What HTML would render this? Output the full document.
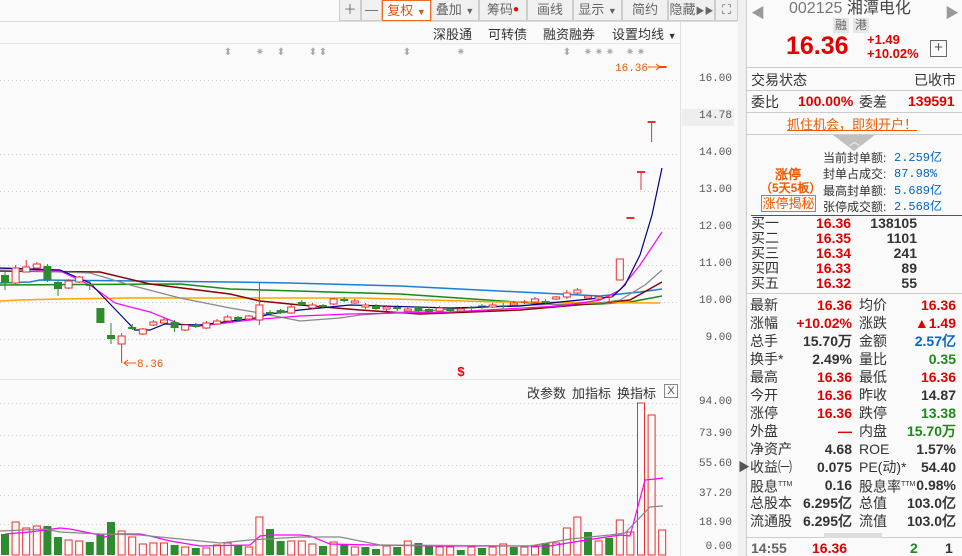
<!DOCTYPE html>
<html><head><meta charset="utf-8">
<style>
*{margin:0;padding:0;box-sizing:border-box}
body{width:962px;height:556px;overflow:hidden;background:#fafafa;font-family:"Liberation Sans","Noto Sans CJK SC",sans-serif;font-size:13px;color:#333;position:relative}
.abs{position:absolute;white-space:nowrap}
.tb{position:absolute;top:0;height:21px;border:1px solid #ccc;border-top:none;background:#f0f0f0;color:#666;font-size:13px;line-height:20px;text-align:center}
.r{color:#e00000}.g{color:#1a8a1a}.b{color:#0066cc}.o{color:#f05a00}
.row{position:absolute;left:750px;width:206px;height:18px;line-height:18px;font-size:14px}
.row span{position:absolute}
.num{font-weight:bold;font-family:"Liberation Sans",sans-serif}
</style></head><body>
<div class="abs" style="left:0;top:21px;width:740px;height:1px;background:#ddd"></div>
<div class="tb" style="left:339px;width:22px">＋</div>
<div class="tb" style="left:361px;width:21px">—</div>
<div class="tb" style="left:382px;width:49px;background:#fff;border:1px solid #f06a20;color:#e05010">复权 <span style="font-size:9px">▼</span></div>
<div class="tb" style="left:431px;width:48px">叠加 <span style="font-size:9px">▼</span></div>
<div class="tb" style="left:479px;width:48px">筹码<span style="color:#e00;font-size:10px;vertical-align:top">●</span></div>
<div class="tb" style="left:527px;width:46px">画线</div>
<div class="tb" style="left:573px;width:49px">显示 <span style="font-size:9px">▼</span></div>
<div class="tb" style="left:622px;width:46px">简约</div>
<div class="tb" style="left:668px;width:47px">隐藏<span style="font-size:9px">▶▶</span></div>
<div class="tb" style="left:715px;width:23px">⛶</div>
<div class="abs" style="left:0;top:43px;width:680px;height:1px;background:#e6e6e6"></div>
<div class="abs" style="left:433px;top:24px;font-size:13px;color:#333">深股通</div>
<div class="abs" style="left:488px;top:24px;font-size:13px;color:#333">可转债</div>
<div class="abs" style="left:543px;top:24px;font-size:13px;color:#333">融资融券</div>
<div class="abs" style="left:612px;top:24px;font-size:13px;color:#333">设置均线 <span style="font-size:9px">▼</span></div>
<div class="abs" style="left:680px;top:21px;width:1px;height:535px;background:#e0e0e0"></div>
<div class="abs" style="left:0;top:379px;width:680px;height:1px;background:#e6e6e6"></div>
<svg class="abs" style="left:0;top:0" width="740" height="556" id="ch"></svg>
<div class="abs" style="left:682px;top:109px;width:52px;height:17px;background:#eee"></div>
<div id="ax"></div>
<div class="abs" style="left:527px;top:383px;font-size:13px">改参数</div>
<div class="abs" style="left:572px;top:383px;font-size:13px">加指标</div>
<div class="abs" style="left:617px;top:383px;font-size:13px">换指标</div>
<div class="abs" style="left:664px;top:384px;width:14px;height:14px;border:1px solid #888;font-size:11px;line-height:12px;text-align:center;color:#555">X</div>
<div class="abs" style="left:738px;top:0;width:8px;height:556px;background:#f0f0f0"></div>
<div class="abs" style="left:746px;top:0;width:1px;height:556px;background:#ccc"></div>
<div class="abs" style="left:738px;top:458px;font-size:12px;color:#555">▶</div>
<div class="abs" style="left:751px;top:3px;color:#999;font-size:14px">◀</div>
<div class="abs" style="left:945px;top:3px;color:#999;font-size:14px">▶</div>
<div class="abs" style="left:789px;top:0px;font-size:16px;line-height:17px;color:#777">002125 <span style="color:#444">湘潭电化</span></div>
<div class="abs" style="left:833px;top:18px;width:16px;height:15px;background:#e6e6e6;font-size:12px;color:#666;text-align:center;line-height:15px">融</div>
<div class="abs" style="left:853px;top:18px;width:16px;height:15px;background:#e6e6e6;font-size:12px;color:#666;text-align:center;line-height:15px">港</div>
<div class="abs r num" style="left:786px;top:32px;font-size:25px">16.36</div>
<div class="abs r num" style="left:867px;top:33px;font-size:13px;line-height:14px">+1.49<br>+10.02%</div>
<div class="abs" style="left:930px;top:40px;width:17px;height:17px;border:1px solid #666;font-size:15px;line-height:14px;text-align:center;color:#555">+</div>
<div class="abs" style="left:747px;top:67px;width:215px;height:1px;background:#ccc"></div>
<div class="abs" style="left:751px;top:70px;font-size:14px">交易状态</div>
<div class="abs" style="left:914px;top:70px;font-size:14px">已收市</div>
<div class="abs" style="left:747px;top:90px;width:215px;height:1px;background:#ccc"></div>
<div class="abs" style="left:751px;top:92px;font-size:14px">委比</div>
<div class="abs r num" style="left:798px;top:93px;font-size:14px">100.00%</div>
<div class="abs" style="left:859px;top:92px;font-size:14px">委差</div>
<div class="abs r num" style="left:908px;top:93px;font-size:14px">139591</div>
<div class="abs" style="left:747px;top:112px;width:215px;height:1px;background:#ccc"></div>
<div class="abs o" style="left:787px;top:114px;font-size:13px;text-decoration:underline">抓住机会，即刻开户！</div>
<div class="abs" style="left:747px;top:134px;width:215px;height:1px;background:#ccc"></div>
<div class="abs" style="left:833px;top:135px;width:0;height:0;border-left:21px solid transparent;border-right:21px solid transparent;border-top:16px solid #c0c0c0"></div>
<div class="abs" style="left:849px;top:133px;color:#fff;font-size:11px">︿</div>
<div class="abs o num" style="left:775px;top:164px;font-size:13px">涨停</div>
<div class="abs o num" style="left:760px;top:179px;font-size:12px">（5天5板）</div>
<div class="abs o" style="left:761px;top:195px;width:55px;height:17px;border:1px solid #f06a20;font-size:13px;line-height:15px;text-align:center">涨停揭秘</div>
<div class="abs" style="left:823px;top:150px;font-size:12px;line-height:16.3px">当前封单额:<br>封单占成交:<br>最高封单额:<br>张停成交额:</div>
<div class="abs b" style="left:894px;top:150px;font-size:12px;line-height:16.3px;font-family:'Liberation Mono','Noto Sans CJK SC',monospace">2.259亿<br>87.98%<br>5.689亿<br>2.568亿</div>
<div class="abs" style="left:751px;top:215px;width:211px;height:1px;background:#555"></div>
<div class="abs" style="left:751px;top:216px;font-size:14px;line-height:15px">买一<br>买二<br>买三<br>买四<br>买五</div>
<div class="abs r num" style="left:816px;top:216px;font-size:14px;line-height:15px">16.36<br>16.35<br>16.34<br>16.33<br>16.32</div>
<div class="abs num" style="left:860px;top:216px;width:57px;text-align:right;font-size:14px;line-height:15px;color:#333">138105<br>1101<br>241<br>89<br>55</div>
<div class="abs" style="left:747px;top:293px;width:215px;height:1px;background:#ccc"></div>
<div id="st"></div>
<div class="abs" style="left:747px;top:537px;width:215px;height:1px;background:#ccc"></div>
<div class="abs" style="left:824px;top:533px;width:58px;height:5px;background:#ddd"></div>
<div class="abs num" style="left:751px;top:540px;font-size:14px;color:#666">14:55</div>
<div class="abs r num" style="left:812px;top:540px;font-size:14px">16.36</div>
<div class="abs g num" style="left:910px;top:540px;font-size:14px">2</div>
<div class="abs num" style="left:945px;top:540px;font-size:14px;color:#333">1</div>
<script>
var S='';
function L(pts,c,w){S+='<polyline fill="none" stroke="'+c+'" stroke-width="'+(w||1)+'" points="'+pts+'"/>';}
[80,154,191,228,265,302,339].forEach(function(y){S+='<line x1="0" x2="680" y1="'+(y+0.5)+'" y2="'+(y+0.5)+'" stroke="#ccc" stroke-dasharray="1,3"/>'});
[403,435,465,495,524].forEach(function(y){S+='<line x1="0" x2="680" y1="'+(y+0.5)+'" y2="'+(y+0.5)+'" stroke="#ccc" stroke-dasharray="1,3"/>'});
L("0,283 30,282 40,280 230,282 290,283 400,286 560,294 600,296 640,292 662,289","#1a7ed6",1.5);
L("0,285 180,284 230,289 330,292 400,294 560,305 600,304 630,302 662,296","#1a8a1a",1.5);
L("0,301 20,300 60,299 130,298 360,298 500,302 660,303","#ffa500",1.5);
L("0,271 100,272 150,284 230,294 260,301 300,305 360,310 420,314 520,310 600,303 630,300 662,282","#8b0000",1.5);
L("0,270 90,273 130,285 180,298 230,308 260,313 300,321 340,318 360,315 500,306 600,303 620,300 645,285 662,270","#888",1.2);
L("0,268 60,271 90,285 115,303 150,312 185,326 200,326 250,320 300,316 350,314 450,312 560,306 600,300 620,290 640,265 662,232","#ff00ff",1.2);
L("0,268 60,270 90,283 135,330 150,330 165,324 200,325 255,318 270,314 300,310 350,305 450,308 520,306 560,302 600,298 612,297 625,285 640,255 652,215 662,168","#000080",1.2);
var C=[[275,283,272,290,0],[268,283,265,285,1],[267,272,260,272,1],[264,268,262,268,1],[266,280,264,282,0],[282,289,280,296,0],[281,288,279,289,1],[277,282,276,283,1],[284,286,280,290,0],[308,323,308,323,0],[335,339,323,344,0],[344,336,333,363,1],[327,329,324,330,0],[334,329,328,335,1],[325,322,320,326,1],[323,320,318,324,1],[322,328,320,332,0],[330,325,324,331,1],[325,327,323,328,0],[328,323,321,329,1],[324,321,319,325,1],[321,317,315,322,1],[317,320,316,321,0],[319,316,315,320,1],[320,305,283,325,1],[312,314,310,316,0],[310,313,309,314,0],[313,307,305,314,1],[302,305,300,306,0],[308,305,303,309,1],[305,307,304,308,0],[304,299,298,305,1],[299,301,297,302,0],[303,301,299,304,1],[305,307,303,309,1],[306,309,304,310,0],[309,307,305,311,1],[307,309,305,311,0],[311,309,307,312,1],[308,311,306,312,0],[309,312,307,313,0],[311,308,306,312,1],[309,311,307,313,0],[311,309,307,312,1],[308,309,306,311,0],[306,307,304,309,0],[307,305,303,308,1],[306,307,303,309,0],[305,303,301,306,1],[303,302,300,304,1],[302,299,297,304,1],[301,303,299,304,0],[299,297,296,300,1],[297,293,290,299,1],[293,290,288,295,1],[298,296,295,300,1],[299,297,296,301,1],[297,298,296,302,1],[280,259,259,280,1],[218,218,218,218,1],[172,172,172,190,1],[122,122,122,142,1],[67,67,67,67,1]];
C.forEach(function(c,i){var x=5+i*10.6,col=c[4]?"#e83030":"#2e8b2e";var t=Math.min(c[0],c[1]),h=Math.max(Math.abs(c[0]-c[1]),1);
S+='<line x1="'+x+'" x2="'+x+'" y1="'+c[2]+'" y2="'+c[3]+'" stroke="'+col+'"/>';
if(h<=1){S+='<line x1="'+(x-4)+'" x2="'+(x+4)+'" y1="'+t+'" y2="'+t+'" stroke="'+col+'" stroke-width="'+(c[4]&&i>58?2:1)+'"/>';}
else if(c[4])S+='<rect x="'+(x-3.5)+'" y="'+t+'" width="7" height="'+h+'" fill="#fafafa" stroke="'+col+'"/>';
else S+='<rect x="'+(x-4)+'" y="'+t+'" width="8" height="'+h+'" fill="'+col+'"/>';});
var V=[[21,0],[33,1],[27,1],[29,1],[29,0],[18,0],[15,1],[14,1],[13,0],[21,0],[33,0],[24,1],[18,1],[11,1],[12,1],[12,1],[10,0],[8,1],[7,0],[7,1],[10,1],[12,1],[10,0],[8,1],[38,1],[26,0],[14,0],[14,1],[14,1],[11,1],[9,0],[13,1],[11,0],[8,1],[8,0],[6,0],[9,1],[8,0],[14,1],[12,0],[10,0],[8,1],[8,1],[5,0],[8,1],[7,0],[8,1],[11,1],[8,0],[8,1],[8,1],[12,0],[12,1],[27,1],[38,1],[23,0],[14,1],[17,0],[35,1],[23,1],[152,1],[140,1],[25,1]];
V.forEach(function(v,i){var x=5+i*10.6,y=555-v[0];if(v[1])S+='<rect x="'+(x-3.5)+'" y="'+y+'" width="7" height="'+v[0]+'" fill="#fafafa" stroke="#e83030"/>';else S+='<rect x="'+(x-4)+'" y="'+y+'" width="8" height="'+v[0]+'" fill="#2e8b2e"/>';});
L("5,534 30,532 45,530 60,528 70,529 100,535 105,537 115,534 140,534 150,536 170,541 200,546 250,545 260,536 270,535 300,535 310,536 330,544 370,545 440,546 530,546 550,546 580,541 600,538 620,535 630,536 645,480 655,479 663,478","#ff00ff",1.2);
L("0,531 45,529 60,532 100,534 140,535 180,539 220,543 250,540 300,537 340,537 380,545 530,546 570,539 610,535 625,533 650,507 663,506","#888",1.2);
[[228,50,"⬍"],[260,50,"✷"],[281,50,"⬍"],[313,50,"⬍"],[323,50,"⬍"],[407,50,"⬍"],[461,50,"✷"],[567,50,"⬍"],[588,50,"✷"],[599,50,"✷"],[610,50,"✷"],[630,50,"✷"],[641,50,"✷"]].forEach(function(s){S+='<text x="'+s[0]+'" y="'+(s[1]+5)+'" font-size="10" fill="#aaa" text-anchor="middle">'+s[2]+'</text>';});
S+='<text x="615" y="71" font-size="11" fill="#f05a00" font-family="Liberation Mono,monospace">16.36</text><line x1="648" x2="667" y1="67" y2="67" stroke="#f05a00"/><polyline points="656,64 660,67 656,70" fill="none" stroke="#f05a00"/>';
S+='<text x="137" y="367" font-size="11" fill="#f05a00" font-family="Liberation Mono,monospace">8.36</text><line x1="124" x2="136" y1="363" y2="363" stroke="#f05a00"/><polyline points="128,360 124,363 128,366" fill="none" stroke="#f05a00"/>';
S+='<text x="461" y="376" font-size="13" font-weight="bold" fill="#e00" text-anchor="middle">$</text>';
document.getElementById('ch').innerHTML=S;
var A='';[["16.00",80],["14.78",117],["14.00",154],["13.00",191],["12.00",228],["11.00",265],["10.00",302],["9.00",339],["94.00",403],["73.90",435],["55.60",465],["37.20",495],["18.90",524],["0.00",548]].forEach(function(a){A+='<div class="abs" style="left:684px;width:48px;text-align:right;top:'+(a[1]-7)+'px;font-size:11px;color:#555;font-family:Liberation Mono,monospace">'+a[0]+'</div>';});
document.getElementById('ax').innerHTML=A;
var R=[["最新","16.36","r","均价","16.36","r"],["涨幅","+10.02%","r","涨跌","▲1.49","r"],["总手","15.70万","","金额","2.57亿","b"],["换手*","2.49%","","量比","0.35","g"],["最高","16.36","r","最低","16.36","r"],["今开","16.36","r","昨收","14.87",""],["涨停","16.36","r","跌停","13.38","g"],["外盘","—","r","内盘","15.70万","g"],["净资产","4.68","","ROE","1.57%",""],["收益㈠","0.075","","PE(动)*","54.40",""],["股息<sup style='font-size:7px'>TTM</sup>","0.16","","股息率<sup style='font-size:7px'>TTM</sup>","0.98%",""],["总股本","6.295亿","","总值","103.0亿",""],["流通股","6.295亿","","流值","103.0亿",""]];
var T='';R.forEach(function(r,i){var y=296+i*18;T+='<div class="row" style="top:'+y+'px"><span style="left:0">'+r[0]+'</span><span class="num '+r[2]+'" style="right:104px">'+r[1]+'</span><span style="left:109px">'+r[3]+'</span><span class="num '+r[5]+'" style="right:0">'+r[4]+'</span></div>';});
document.getElementById('st').innerHTML=T;
</script>
</body></html>
